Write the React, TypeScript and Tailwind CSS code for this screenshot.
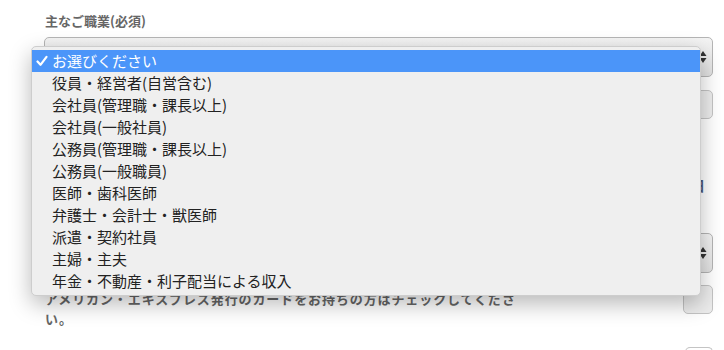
const options = [
  'お選びください',
  '役員・経営者(自営含む)',
  '会社員(管理職・課長以上)',
  '会社員(一般社員)',
  '公務員(管理職・課長以上)',
  '公務員(一般職員)',
  '医師・歯科医師',
  '弁護士・会計士・獣医師',
  '派遣・契約社員',
  '主婦・主夫',
  '年金・不動産・利子配当による収入',
];

function Arrows() {
  return (
    <svg width="8" height="14" viewBox="0 0 8 14" className="text-[#333]">
      <path d="M4 1 L7.5 6 L0.5 6 Z" fill="currentColor" />
      <path d="M4 13 L7.5 8 L0.5 8 Z" fill="currentColor" />
    </svg>
  );
}

function FakeSelect() {
  return (
    <div className="h-[40px] rounded-[5px] border border-[#b5b5b5] bg-gradient-to-b from-[#f4f4f4] to-[#e2e2e2] flex items-center justify-end pr-[5px]">
      <Arrows />
    </div>
  );
}

export default function App() {
  const selected = 0;

  return (
    <div
      className="relative w-[724px] h-[350px] overflow-hidden bg-white"
      style={{ fontFamily: '"Noto Sans CJK JP", sans-serif' }}
    >
      {/* form underneath */}
      <div className="pt-[12px] pl-[44px] pr-[11px]">
        <div className="text-[13px] font-bold text-[#666] leading-[18px] pl-[1px]">主なご職業(必須)</div>
        <div className="mt-[7px]">
          <FakeSelect />
        </div>
        <div className="mt-[13px] h-[29px] rounded-[5px] border border-[#c4c4c4] bg-[#ececec]" />
        <div className="mt-[56px] h-[20px] flex justify-end pr-[8px] text-[14px] font-bold text-[#4d5a78] leading-[20px]">
          生年月日
        </div>
        <div className="mt-[38px]">
          <FakeSelect />
        </div>
        <div className="mt-[12px] flex justify-between">
          <div className="w-[474px] pt-[4px] text-[13px] font-bold text-[#666] leading-[20px] pl-[1px] tracking-[0.9px]">
            アメリカン・エキスプレス発行のカードをお持ちの方はチェックしてください。
          </div>
          <div className="w-[30px] h-[29px] rounded-[5px] border border-[#c4c4c4] bg-[#ececec]" />
        </div>
        <div className="mt-[18px] flex justify-end">
          <div className="w-[28px] h-[10px] rounded-t-[5px] border-t border-x border-[#c4c4c4]" />
        </div>
      </div>

      {/* open dropdown menu */}
      <div className="absolute left-[31px] top-[46px] w-[670px] rounded-[5px] border border-[#cdcdcd] bg-[#efefef] py-[3px] shadow-[0_8px_22px_rgba(0,0,0,0.28)]">
        {options.map((label, i) => (
          <div
            key={label}
            className={
              'h-[22px] flex items-center text-[15px] leading-[22px] ' +
              (i === selected ? 'bg-[#4b95f9] text-white' : 'text-[#222]')
            }
          >
            <span className="w-[20px] flex justify-center">
              {i === selected && (
                <svg width="12" height="12" viewBox="0 0 12 12">
                  <path d="M1.5 6.5 L4.5 9.8 L10.5 1.8" fill="none" stroke="white" strokeWidth="2.2" strokeLinecap="round" strokeLinejoin="round" />
                </svg>
              )}
            </span>
            <span>{label}</span>
          </div>
        ))}
      </div>
    </div>
  );
}
